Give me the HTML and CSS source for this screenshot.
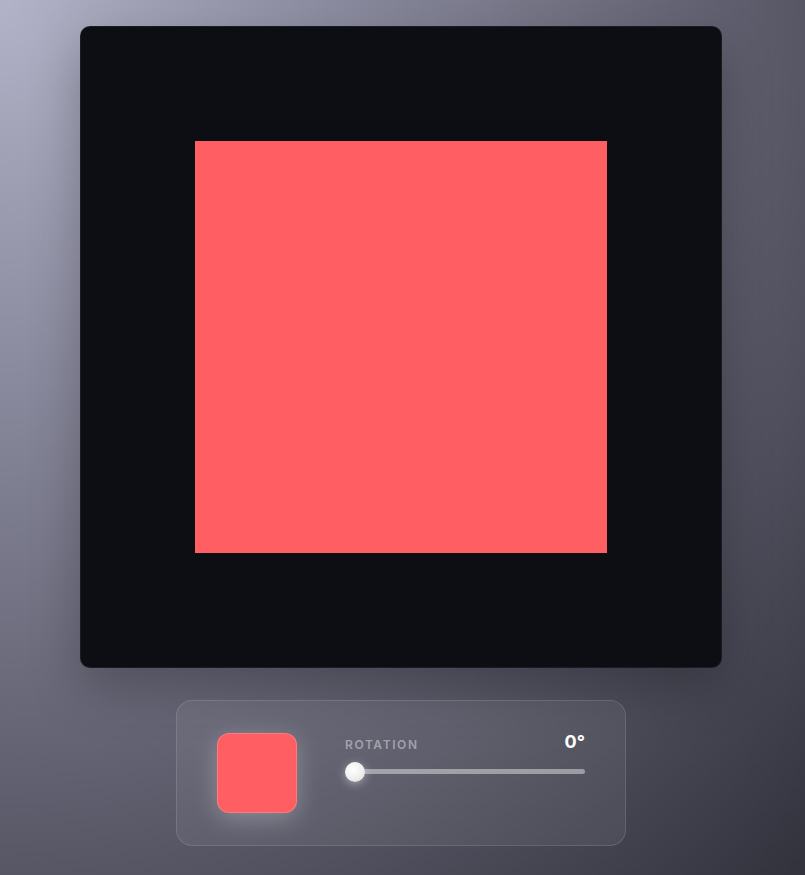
FILE: index.html
```html
<!DOCTYPE html>
<html>
<head>
<meta charset="utf-8">
<link rel="stylesheet" href="styles.css">
</head>
<body>
<main class="page">
  <section class="stage">
    <div class="shape"></div>
  </section>
  <section class="panel">
    <div class="swatch"></div>
    <div class="controls">
      <div class="row">
        <span class="label">ROTATION</span>
        <span class="value">0°</span>
      </div>
      <div class="slider">
        <div class="thumb"></div>
      </div>
    </div>
  </section>
</main>
</body>
</html>
```
FILE: styles.css
```css
html, body {
  margin: 0;
  padding: 0;
  height: 100%;
}
body {
  background: radial-gradient(ellipse 140% 140% at 0% 0%, #b2b2c8 0%, #7e7e91 40%, #585867 70%, #33333e 100%);
  font-family: Inter, "Noto Sans", sans-serif;
  overflow: hidden;
}
.page {
  display: flex;
  flex-direction: column;
  align-items: center;
  padding-top: 26px;
  padding-right: 3px;
  height: 875px;
  box-sizing: border-box;
}
.stage {
  width: 642px;
  height: 642px;
  background: #0d0e13;
  border-radius: 10px;
  border: 1px solid rgba(255,255,255,0.06);
  box-sizing: border-box;
  display: flex;
  align-items: center;
  justify-content: center;
  box-shadow: 0 20px 50px rgba(0,0,0,0.25);
}
.shape {
  width: 412px;
  height: 412px;
  background: #ff5f62;
}
.panel {
  margin-top: 32px;
  width: 450px;
  height: 146px;
  box-sizing: border-box;
  padding: 32px 40px 32px 40px;
  border-radius: 16px;
  background: rgba(255,255,255,0.06);
  border: 1px solid rgba(255,255,255,0.12);
  display: flex;
  align-items: center;
  gap: 48px;
}
.swatch {
  width: 80px;
  height: 80px;
  flex: none;
  border-radius: 12px;
  background: #ff5f62;
  border: 1px solid rgba(255,255,255,0.18);
  box-sizing: border-box;
  box-shadow: 0 6px 24px rgba(255,255,255,0.28);
}
.controls {
  flex: 1;
  display: flex;
  flex-direction: column;
  gap: 17px;
  margin-top: -39px;
}
.row {
  display: flex;
  justify-content: space-between;
  align-items: flex-end;
}
.label {
  font-size: 12px;
  font-weight: 600;
  letter-spacing: 1.6px;
  color: rgba(255,255,255,0.42);
  line-height: 14px;
}
.value {
  font-size: 18px;
  font-weight: 700;
  color: #ffffff;
  line-height: 18px;
  margin-bottom: 1px;
}
.slider {
  position: relative;
  height: 5px;
  border-radius: 3px;
  background: rgba(255,255,255,0.42);
}
.thumb {
  position: absolute;
  left: 0;
  top: 50%;
  width: 20px;
  height: 20px;
  margin-top: -10px;
  border-radius: 50%;
  background: radial-gradient(circle at 40% 35%, #ffffff 0%, #f0f0f0 50%, #d8d8dc 100%);
  box-shadow: 0 2px 10px rgba(255,255,255,0.45);
}
```
